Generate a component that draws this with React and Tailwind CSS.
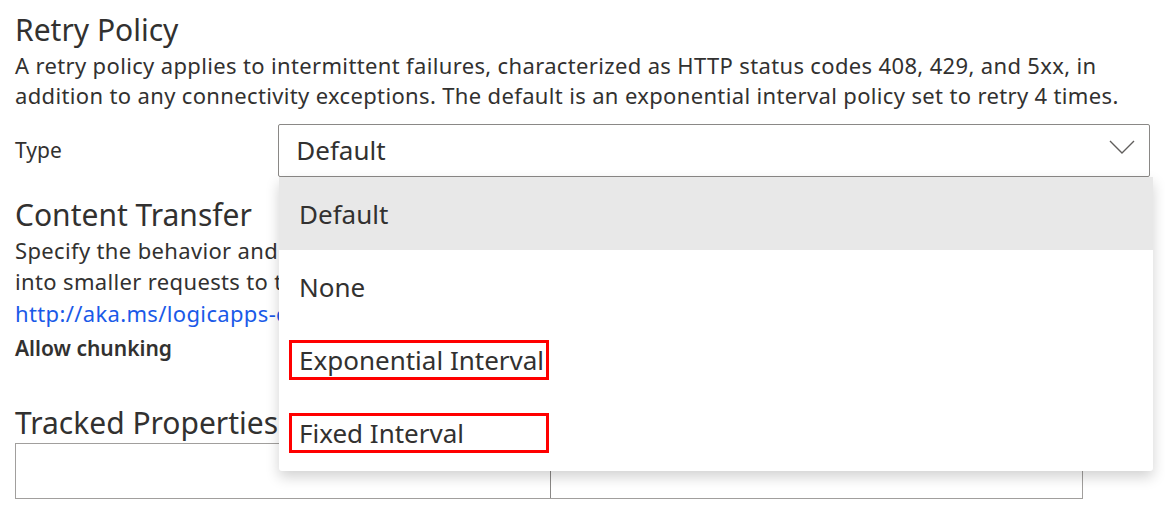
const OPTIONS = [
  { label: 'Default', selected: true },
  { label: 'None' },
  { label: 'Exponential Interval', marked: true },
  { label: 'Fixed Interval', marked: true },
];

const FONT = "font-['Noto_Sans','Open_Sans',sans-serif]";
const BODY = 'text-[22px] tracking-[0.35px] whitespace-nowrap';

function Chevron() {
  return (
    <svg width="26" height="14" viewBox="0 0 26 14" fill="none" className="mb-[8px]">
      <path d="M1 1L13 13L25 1" stroke="#605e5c" strokeWidth="1.4" />
    </svg>
  );
}

export default function App() {
  return (
    <div className={`relative w-[1165px] h-[520px] overflow-hidden bg-white text-[#323130] ${FONT}`}>
      <div className="px-[15px] pt-[10px]">
        {/* Retry policy */}
        <h2 className="text-[30px] leading-[40px] font-normal">Retry Policy</h2>
        <p className={`${BODY} leading-[30px]`}>
          A retry policy applies to intermittent failures, characterized as HTTP status codes 408, 429, and 5xx, in
        </p>
        <p className={`${BODY} leading-[30px]`}>
          addition to any connectivity exceptions. The default is an exponential interval policy set to retry 4 times.
        </p>

        <div className="flex items-center mt-[14px]">
          <span className="w-[264px] text-[21px]">Type</span>
          <div className="flex items-center justify-between w-[874px] h-[53px] border border-[#8a8886] rounded-[2px] pl-[17px] pr-[14px]">
            <span className="text-[26px]">Default</span>
            <Chevron />
          </div>
        </div>

        {/* Content transfer (partly covered by the open menu) */}
        <h2 className="text-[30px] leading-[40px] mt-[18px]">Content Transfer</h2>
        <div className="w-[264px] overflow-hidden">
          <p className={`${BODY} leading-[31px]`}>
            Specify the behavior and capabilities for transferring content over HTTP. Large messages may be split up
          </p>
          <p className={`${BODY} leading-[31px]`}>
            into smaller requests to the connector to allow large message upload. Details can be found at
          </p>
          <p className={`${BODY} leading-[32px] text-[#1a5ae8]`}>
            http://aka.ms/logicapps-chunk#upload-and-download-in-chunks
          </p>
        </div>
        <p className="text-[21px] leading-[38px] font-semibold">Allow chunking</p>

        {/* Tracked properties */}
        <h2 className="text-[30px] leading-[40px] mt-[36px]">Tracked Properties</h2>
        <div className="flex w-[1068px] h-[56px] border border-[#a19f9d]">
          <div className="w-[535px] border-r border-[#8a8886]" />
          <div className="flex-1" />
        </div>
      </div>

      {/* Open dropdown menu */}
      <div className="absolute left-[279px] top-[177px] w-[874px] bg-white rounded-b-[3px] shadow-[0_6px_14px_rgba(0,0,0,0.18)]">
        {OPTIONS.map(o => (
          <div
            key={o.label}
            className={`h-[73px] flex items-center pl-[10px] ${o.selected ? 'bg-[#e8e8e8]' : ''}`}
          >
            <span
              className={`text-[26px] leading-[34px] pl-[7px] border-[3px] ${o.marked ? 'border-[#ff0000] w-[260px]' : 'border-transparent'}`}
            >
              {o.label}
            </span>
          </div>
        ))}
        <div className="h-[2px]" />
      </div>
    </div>
  );
}
